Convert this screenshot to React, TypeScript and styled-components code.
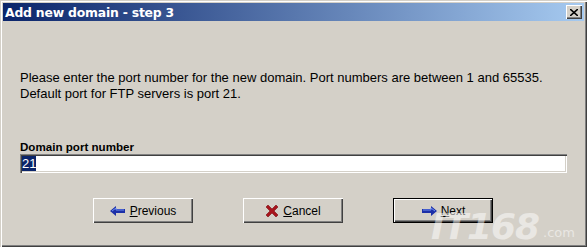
import React from "react";
import styled, { createGlobalStyle } from "styled-components";

const Global = createGlobalStyle`
  html, body { margin: 0; padding: 0; background: #d4d0c8; }
  body { width: 587px; height: 247px; overflow: hidden; }
`;

const Window = styled.div`
  position: relative;
  box-sizing: border-box;
  width: 587px;
  height: 247px;
  background: #d4d0c8;
  padding: 3px;
  box-shadow: inset 1px 1px 0 #d4d0c8, inset 2px 2px 0 #ffffff,
    inset -1px -1px 0 #404040, inset -2px -2px 0 #808080;
  display: flex;
  flex-direction: column;
  overflow: hidden;
`;

const TitleBar = styled.div`
  height: 18px;
  background: linear-gradient(to right, #0a246a, #a6caf0);
  display: flex;
  align-items: center;
  justify-content: space-between;
  padding: 0 2px 0 2px;
`;

const Title = styled.span`
  color: #fff;
  font-family: "DejaVu Sans", Verdana, sans-serif;
  font-weight: bold;
  font-size: 12.4px;
  letter-spacing: -0.2px;
`;

const CloseBtn = styled.div`
  width: 16px;
  height: 14px;
  box-sizing: border-box;
  background: #d4d0c8;
  box-shadow: inset 1px 1px 0 #ffffff, inset -1px -1px 0 #404040,
    inset -2px -2px 0 #808080;
  display: flex;
  align-items: center;
  justify-content: center;
`;

const Body = styled.div`
  flex: 1;
  display: flex;
  flex-direction: column;
  padding: 49px 0 0 17px;
  font-family: "Liberation Sans", Arial, sans-serif;
`;

const Para = styled.p`
  margin: 0;
  font-size: 13px;
  line-height: 16px;
  color: #000;
`;

const Label = styled.div`
  margin-top: 38px;
  font-family: "Liberation Sans", Tahoma, sans-serif;
  font-weight: bold;
  font-size: 11.6px;
  line-height: 13px;
  color: #000;
`;

const Input = styled.div`
  margin-top: 1px;
  width: 547px;
  height: 19px;
  box-sizing: border-box;
  background: #fff;
  box-shadow: inset 1px 1px 0 #808080, inset 2px 2px 0 #404040,
    inset -1px -1px 0 #ffffff, inset -2px -2px 0 #d4d0c8;
  padding: 2px 0 0 2px;
  font-family: "Liberation Sans", Arial, sans-serif;
  font-size: 13px;
  line-height: 15px;
`;

const Selected = styled.span`
  background: #0a246a;
  color: #fff;
`;

const ButtonRow = styled.div`
  display: flex;
  gap: 50px;
  margin-top: 25px;
  padding-left: 73px;
`;

const Button = styled.div<{ $default?: boolean }>`
  width: 100px;
  height: 25px;
  box-sizing: border-box;
  background: #d4d0c8;
  display: flex;
  align-items: center;
  justify-content: center;
  gap: 4px;
  font-family: "Liberation Sans", Tahoma, sans-serif;
  font-size: 12px;
  color: #000;
  box-shadow: ${(p) =>
    p.$default
      ? "inset 0 0 0 1px #000, inset 2px 2px 0 #ffffff, inset -2px -2px 0 #404040, inset -3px -3px 0 #808080"
      : "inset 1px 1px 0 #ffffff, inset -1px -1px 0 #404040, inset -2px -2px 0 #808080"};
`;

const U = styled.span`
  text-decoration: underline;
`;

const Watermark = styled.div`
  position: absolute;
  right: 12px;
  bottom: 7px;
  height: 26px;
  font-family: "DejaVu Sans", sans-serif;
  font-style: italic;
  font-weight: bold;
  font-size: 36px;
  line-height: 26px;
  color: rgba(255, 255, 255, 0.5);
  letter-spacing: -1px;
  pointer-events: none;
  display: flex;
  align-items: flex-end;
`;

const WmSmall = styled.span`
  font-size: 13px;
  line-height: 13px;
  font-weight: normal;
  font-style: normal;
  letter-spacing: 0;
  margin-left: 4px;
  margin-bottom: 1px;
`;

const LeftArrow = () => (
  <svg width="16" height="10" viewBox="0 0 16 10">
    <path d="M0 5 L6 0 L6 3 L15 3 L15 7 L6 7 L6 10 Z" fill="#1c2fa8" />
    <path d="M2 5 L6 2 L6 4 L14 4" stroke="#6f8ff0" strokeWidth="1" fill="none" />
  </svg>
);

const RightArrow = () => (
  <svg width="16" height="10" viewBox="0 0 16 10">
    <path d="M16 5 L10 0 L10 3 L1 3 L1 7 L10 7 L10 10 Z" fill="#1c2fa8" />
    <path d="M2 4 L10 4 L10 2 L14 5" stroke="#6f8ff0" strokeWidth="1" fill="none" />
  </svg>
);

const RedX = () => (
  <svg width="14" height="14" viewBox="0 0 14 14">
    <path
      d="M1 3 L3 1 L7 5 L11 1 L13 3 L9 7 L13 11 L11 13 L7 9 L3 13 L1 11 L5 7 Z"
      fill="#a8141c"
      stroke="#7a0c10"
      strokeWidth="0.6"
    />
  </svg>
);

export default function App() {
  return (
    <>
      <Global />
      <Window>
        <TitleBar>
          <Title>Add new domain - step 3</Title>
          <CloseBtn>
            <svg width="8" height="7" viewBox="0 0 8 7">
              <path d="M0 0 L8 7 M8 0 L0 7" stroke="#000" strokeWidth="1.6" />
            </svg>
          </CloseBtn>
        </TitleBar>
        <Body>
          <Para>
            Please enter the port number for the new domain. Port numbers are between 1 and 65535.
            <br />
            Default port for FTP servers is port 21.
          </Para>
          <Label>Domain port number</Label>
          <Input>
            <Selected>21</Selected>
          </Input>
          <ButtonRow>
            <Button>
              <LeftArrow />
              <span>
                <U>P</U>revious
              </span>
            </Button>
            <Button>
              <RedX />
              <span>
                <U>C</U>ancel
              </span>
            </Button>
            <Button $default>
              <RightArrow />
              <span>
                <U>N</U>ext
              </span>
            </Button>
          </ButtonRow>
        </Body>
        <Watermark>
          IT168<WmSmall>.com</WmSmall>
        </Watermark>
      </Window>
    </>
  );
}
